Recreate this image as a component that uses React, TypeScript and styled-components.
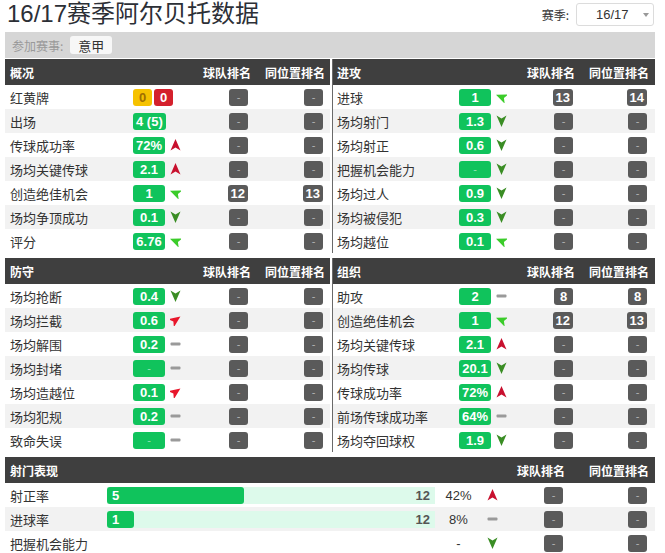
import React from "react";
import styled, { createGlobalStyle } from "styled-components";

const GlobalStyle = createGlobalStyle`
  html, body { margin: 0; padding: 0; background: #fff; }
  body {
    font-family: "Noto Sans CJK SC", "Liberation Sans", sans-serif;
    color: #333;
  }
`;

const Page = styled.div`
  width: 650px;
  padding: 0 10px 0 5px;
`;

const TitleBar = styled.div`
  height: 32px;
  display: flex;
  align-items: flex-start;
  justify-content: space-between;
`;

const Title = styled.h1`
  margin: 0;
  padding-left: 2px;
  font-family: "Liberation Sans", "Noto Sans CJK SC", sans-serif;
  font-size: 24px;
  font-weight: normal;
  line-height: 28px;
  color: #2c2f36;
`;

const SeasonPicker = styled.div`
  display: flex;
  align-items: center;
  gap: 7px;
  margin-top: 3px;
  margin-right: 1px;
  font-size: 12px;
  color: #333;
`;

const Select = styled.div`
  width: 78px;
  height: 23px;
  box-sizing: border-box;
  border: 1px solid #dcdcdc;
  border-radius: 3px;
  display: flex;
  align-items: center;
  justify-content: space-between;
  padding: 0 4px 0 19px;
  font-family: "Liberation Sans", sans-serif;
  font-size: 13px;
  color: #333;
`;

const Caret = styled.span`
  width: 0;
  height: 0;
  border-left: 3px solid transparent;
  border-right: 3px solid transparent;
  border-top: 4px solid #999;
`;

const FilterBar = styled.div`
  height: 26px;
  background: #d6d6d6;
  display: flex;
  align-items: center;
  gap: 7px;
  padding-left: 7px;
  margin-bottom: 1px;
  font-size: 12px;
  color: #999;
`;

const FilterButton = styled.span`
  width: 42px;
  height: 18px;
  background: #f7f7f7;
  border-radius: 3px;
  display: flex;
  align-items: center;
  justify-content: center;
  font-size: 13px;
  color: #333;
`;

const Columns = styled.div`
  display: grid;
  grid-template-columns: 325px 323px;
  column-gap: 2px;
  row-gap: 5px;
  margin-bottom: 5px;
`;

const Section = styled.section<{ $divider?: boolean }>`
  border-left: ${(p) => (p.$divider ? "1px solid #6a6a6a" : "none")};
`;

const HeaderRow = styled.div<{ $cols: string; $padRight: number }>`
  display: grid;
  grid-template-columns: ${(p) => p.$cols};
  padding-right: ${(p) => p.$padRight}px;
  height: 26px;
  align-items: center;
  background: #3f3f3f;
  color: #fff;
  font-size: 12px;
  font-weight: bold;
`;

const HeadTitle = styled.span<{ $padLeft: number; $span?: number }>`
  padding-left: ${(p) => p.$padLeft}px;
  grid-column: ${(p) => (p.$span ? `span ${p.$span}` : "auto")};
`;

const HeadRank = styled.span`
  text-align: right;
  white-space: nowrap;
`;

const Body = styled.div``;

const Row = styled.div<{ $cols: string; $padRight: number }>`
  display: grid;
  grid-template-columns: ${(p) => p.$cols};
  padding-right: ${(p) => p.$padRight}px;
  height: 24px;
  align-items: center;
  background: #fff;
  &:nth-child(even) {
    background: #f2f2f2;
  }
`;

const Label = styled.span<{ $padLeft: number }>`
  padding-left: ${(p) => p.$padLeft}px;
  font-size: 13px;
  color: #333;
  white-space: nowrap;
`;

const ValueCell = styled.div`
  display: flex;
  align-items: center;
  gap: 5px;
`;

const Cards = styled.div`
  display: flex;
  gap: 2px;
`;

type Tone = "green" | "yellow" | "red" | "gray";

const toneBg: Record<Tone, string> = {
  green: "#10c35c",
  yellow: "#f6c200",
  red: "#d4202c",
  gray: "#5a5a5a",
};

const toneFg: Record<Tone, string> = {
  green: "#fff",
  yellow: "#a06f00",
  red: "#fff",
  gray: "#fff",
};

const Badge = styled.span<{ $tone: Tone; $min: number; $empty?: boolean }>`
  display: inline-block;
  box-sizing: border-box;
  min-width: ${(p) => p.$min}px;
  height: 17px;
  padding: 0 3px;
  border-radius: 3px;
  background: ${(p) => toneBg[p.$tone]};
  color: ${(p) => (p.$empty ? "rgba(255,255,255,0.55)" : toneFg[p.$tone])};
  font-family: "Liberation Sans", Arial, sans-serif;
  font-size: ${(p) => (p.$empty ? 11 : 13)}px;
  font-weight: ${(p) => (p.$empty ? "normal" : "bold")};
  line-height: 17px;
  text-align: center;
  white-space: nowrap;
`;

const RankCell = styled.div`
  display: flex;
  justify-content: flex-end;
  padding-right: 2px;
`;

const ArrowSvg = styled.svg`
  display: block;
  flex: none;
`;

type Trend = "up" | "down" | "left" | "upright" | "flat" | "none";

const trendStyle: Record<Exclude<Trend, "flat" | "none">, { color: string; rot: number }> = {
  up: { color: "#c8102e", rot: 0 },
  down: { color: "#3a8d24", rot: 180 },
  left: { color: "#3bcc2a", rot: -68 },
  upright: { color: "#e8162b", rot: 55 },
};

const Arrow: React.FC<{ trend: Trend }> = ({ trend }) => {
  if (trend === "none") return null;
  if (trend === "flat") {
    return (
      <ArrowSvg width="11" height="12" viewBox="0 0 11 12">
        <rect x="0.5" y="4.5" width="10" height="3" rx="1" fill="#9a9a9a" />
      </ArrowSvg>
    );
  }
  const s = trendStyle[trend];
  return (
    <ArrowSvg width="11" height="12" viewBox="-5.5 -6 11 12">
      <path d="M0 -6 L5 5.5 L0 2.6 L-5 5.5 Z" fill={s.color} transform={`rotate(${s.rot})`} />
    </ArrowSvg>
  );
};

type StatRow = {
  label: string;
  value?: string;
  cards?: [string, string];
  trend: Trend;
  team: string;
  pos: string;
};

const Rank: React.FC<{ v: string }> = ({ v }) => (
  <RankCell>
    <Badge $tone="gray" $min={19} $empty={v === "-"}>
      {v}
    </Badge>
  </RankCell>
);

type Layout = { cols: string; padLeft: number; padRight: number };

const leftLayout: Layout = { cols: "128px 70px 47px 75px", padLeft: 5, padRight: 5 };
const rightLayout: Layout = { cols: "126px 68px 48px 74px", padLeft: 4, padRight: 6 };

const StatSection: React.FC<{ title: string; rows: StatRow[]; layout: Layout; divider?: boolean }> = ({
  title,
  rows,
  layout,
  divider,
}) => (
  <Section $divider={divider}>
    <HeaderRow $cols={layout.cols} $padRight={layout.padRight}>
      <HeadTitle $padLeft={layout.padLeft} $span={2}>
        {title}
      </HeadTitle>
      <HeadRank>球队排名</HeadRank>
      <HeadRank>同位置排名</HeadRank>
    </HeaderRow>
    <Body>
      {rows.map((r) => (
        <Row key={r.label} $cols={layout.cols} $padRight={layout.padRight}>
          <Label $padLeft={layout.padLeft}>{r.label}</Label>
          <ValueCell>
            {r.cards ? (
              <Cards>
                <Badge $tone="yellow" $min={19}>
                  {r.cards[0]}
                </Badge>
                <Badge $tone="red" $min={19}>
                  {r.cards[1]}
                </Badge>
              </Cards>
            ) : (
              <Badge $tone="green" $min={32} $empty={r.value === "-"}>
                {r.value}
              </Badge>
            )}
            <Arrow trend={r.trend} />
          </ValueCell>
          <Rank v={r.team} />
          <Rank v={r.pos} />
        </Row>
      ))}
    </Body>
  </Section>
);

const overview: StatRow[] = [
  { label: "红黄牌", cards: ["0", "0"], trend: "none", team: "-", pos: "-" },
  { label: "出场", value: "4 (5)", trend: "none", team: "-", pos: "-" },
  { label: "传球成功率", value: "72%", trend: "up", team: "-", pos: "-" },
  { label: "场均关键传球", value: "2.1", trend: "up", team: "-", pos: "-" },
  { label: "创造绝佳机会", value: "1", trend: "left", team: "12", pos: "13" },
  { label: "场均争顶成功", value: "0.1", trend: "down", team: "-", pos: "-" },
  { label: "评分", value: "6.76", trend: "left", team: "-", pos: "-" },
];

const attack: StatRow[] = [
  { label: "进球", value: "1", trend: "left", team: "13", pos: "14" },
  { label: "场均射门", value: "1.3", trend: "down", team: "-", pos: "-" },
  { label: "场均射正", value: "0.6", trend: "down", team: "-", pos: "-" },
  { label: "把握机会能力", value: "-", trend: "down", team: "-", pos: "-" },
  { label: "场均过人", value: "0.9", trend: "down", team: "-", pos: "-" },
  { label: "场均被侵犯", value: "0.3", trend: "down", team: "-", pos: "-" },
  { label: "场均越位", value: "0.1", trend: "left", team: "-", pos: "-" },
];

const defense: StatRow[] = [
  { label: "场均抢断", value: "0.4", trend: "down", team: "-", pos: "-" },
  { label: "场均拦截", value: "0.6", trend: "upright", team: "-", pos: "-" },
  { label: "场均解围", value: "0.2", trend: "flat", team: "-", pos: "-" },
  { label: "场均封堵", value: "-", trend: "flat", team: "-", pos: "-" },
  { label: "场均造越位", value: "0.1", trend: "upright", team: "-", pos: "-" },
  { label: "场均犯规", value: "0.2", trend: "flat", team: "-", pos: "-" },
  { label: "致命失误", value: "-", trend: "flat", team: "-", pos: "-" },
];

const organize: StatRow[] = [
  { label: "助攻", value: "2", trend: "flat", team: "8", pos: "8" },
  { label: "创造绝佳机会", value: "1", trend: "left", team: "12", pos: "13" },
  { label: "场均关键传球", value: "2.1", trend: "up", team: "-", pos: "-" },
  { label: "场均传球", value: "20.1", trend: "down", team: "-", pos: "-" },
  { label: "传球成功率", value: "72%", trend: "up", team: "-", pos: "-" },
  { label: "前场传球成功率", value: "64%", trend: "flat", team: "-", pos: "-" },
  { label: "场均夺回球权", value: "1.9", trend: "down", team: "-", pos: "-" },
];

const shotCols = "102px 328px 47px 20px 63px 84px";

const Track = styled.div`
  height: 17px;
  background: #ddfaeb;
  display: flex;
  align-items: center;
  font-family: "Liberation Sans", Arial, sans-serif;
  font-size: 13px;
  font-weight: bold;
`;

const Fill = styled.div`
  height: 17px;
  box-sizing: border-box;
  padding-left: 5px;
  border-radius: 3px;
  background: #10c35c;
  color: #fff;
  line-height: 17px;
`;

const Total = styled.span`
  margin-left: auto;
  padding-right: 5px;
  color: #555;
`;

const Pct = styled.span`
  text-align: center;
  font-family: "Liberation Sans", Arial, sans-serif;
  font-size: 13px;
  color: #333;
`;

const ArrowCell = styled.div`
  padding-left: 5px;
`;

type ShotRow = { label: string; made?: number; total?: number; pct: string; trend: Trend };

const shots: ShotRow[] = [
  { label: "射正率", made: 5, total: 12, pct: "42%", trend: "up" },
  { label: "进球率", made: 1, total: 12, pct: "8%", trend: "flat" },
  { label: "把握机会能力", pct: "-", trend: "down" },
];

const TRACK_W = 328;

export default function App() {
  return (
    <>
      <GlobalStyle />
      <Page>
        <TitleBar>
          <Title>16/17赛季阿尔贝托数据</Title>
          <SeasonPicker>
            赛季:
            <Select>
              16/17
              <Caret />
            </Select>
          </SeasonPicker>
        </TitleBar>
        <FilterBar>
          参加赛事:
          <FilterButton>意甲</FilterButton>
        </FilterBar>
        <Columns>
          <StatSection title="概况" rows={overview} layout={leftLayout} />
          <StatSection title="进攻" rows={attack} layout={rightLayout} divider />
          <StatSection title="防守" rows={defense} layout={leftLayout} />
          <StatSection title="组织" rows={organize} layout={rightLayout} divider />
        </Columns>
        <Section>
          <HeaderRow $cols={shotCols} $padRight={6}>
            <HeadTitle $padLeft={5} $span={4}>
              射门表现
            </HeadTitle>
            <HeadRank>球队排名</HeadRank>
            <HeadRank>同位置排名</HeadRank>
          </HeaderRow>
          <Body>
            {shots.map((s) => (
              <Row key={s.label} $cols={shotCols} $padRight={6}>
                <Label $padLeft={5}>{s.label}</Label>
                {s.total ? (
                  <Track>
                    <Fill style={{ width: `${Math.max(26, (TRACK_W * (s.made || 0)) / s.total)}px` }}>{s.made}</Fill>
                    <Total>{s.total}</Total>
                  </Track>
                ) : (
                  <span />
                )}
                <Pct>{s.pct}</Pct>
                <ArrowCell>
                  <Arrow trend={s.trend} />
                </ArrowCell>
                <Rank v="-" />
                <Rank v="-" />
              </Row>
            ))}
          </Body>
        </Section>
      </Page>
    </>
  );
}
